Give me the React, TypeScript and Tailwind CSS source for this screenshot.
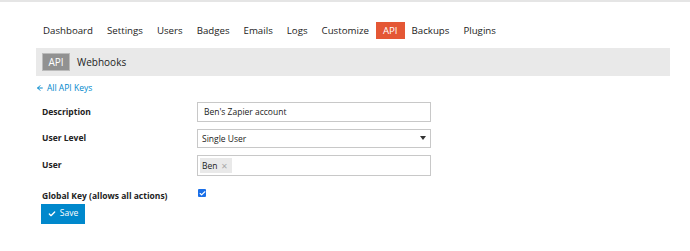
import { Check, ArrowLeft } from "lucide-react"

const NAV = ["Dashboard", "Settings", "Users", "Badges", "Emails", "Logs", "Customize", "API", "Backups", "Plugins"]

function Row({ label, children }: { label: string; children: React.ReactNode }) {
  return (
    <div className="flex items-center">
      <div className="w-[161px] pl-[6px] pt-[1px] text-[8.5px] font-bold text-[#222]">{label}</div>
      {children}
    </div>
  )
}

export default function App() {
  return (
    <div
      className="w-[690px] h-[251px] bg-white border-t-2 border-[#e5e5e5] overflow-hidden"
      style={{ fontFamily: '"Open Sans", sans-serif' }}
    >
      {/* Admin nav */}
      <div className="flex items-start pl-[36px] pt-[20px] h-[46px]">
        {NAV.map((item) => (
          <span
            key={item}
            className={
              item === "API"
                ? "px-[7px] h-[17px] leading-[17px] text-[9.7px] bg-[#e45735] text-white"
                : "px-[7px] h-[17px] leading-[17px] text-[9.7px] text-[#222]"
            }
          >
            {item}
          </span>
        ))}
      </div>

      {/* Sub header */}
      <div className="ml-[36px] w-[634px] h-[28px] bg-[#e9e9e9] flex items-center pl-[6px] gap-[7px]">
        <span className="h-[18px] w-[28px] text-center leading-[16px] text-[10px] bg-[#919191] text-white border border-[#bbb]">
          API
        </span>
        <span className="text-[10px] text-[#222]">Webhooks</span>
      </div>

      {/* Back link */}
      <div className="ml-[36px] mt-[6px] flex items-center gap-[3px] text-[8.5px] text-[#0088cc]">
        <ArrowLeft size={8} strokeWidth={3} />
        All API Keys
      </div>

      {/* Form */}
      <div className="mt-[7px] flex flex-col">
        <div className="h-[20px] mb-[7px] ml-[36px]">
          <Row label="Description">
            <div className="w-[234px] h-[20px] border border-[#c8c8c8] px-[6px] text-[8.5px] leading-[18px] text-[#222]">
              Ben's Zapier account
            </div>
          </Row>
        </div>
        <div className="h-[19px] mb-[7px] ml-[36px]">
          <Row label="User Level">
            <div className="w-[234px] h-[19px] border border-[#c8c8c8] pl-[4px] pr-[4px] text-[8.5px] leading-[17px] text-[#222] flex items-center justify-between">
              Single User
              <span className="w-0 h-0 border-l-[3px] border-r-[3px] border-t-[4px] border-l-transparent border-r-transparent border-t-[#333]" />
            </div>
          </Row>
        </div>
        <div className="h-[21px] ml-[36px]">
          <Row label="User">
            <div className="w-[234px] h-[21px] border border-[#c8c8c8] p-[2px] flex items-center">
              <span className="h-[15px] bg-[#e9e9e9] pl-[2px] pr-[4px] text-[8.5px] leading-[15px] text-[#222] flex items-center gap-[4px]">
                Ben
                <span className="text-[#aaa] text-[8px]">✕</span>
              </span>
            </div>
          </Row>
        </div>
        <div className="h-[18px] mt-[13px] ml-[36px]">
          <Row label="Global Key (allows all actions)">
            <span className="ml-[1px] -mt-[5px] w-[8px] h-[8px] rounded-[1px] bg-[#1a6fe8] flex items-center justify-center">
              <Check size={7} strokeWidth={4} className="text-white" />
            </span>
          </Row>
        </div>
        <div className="ml-[41px] -mt-[3px]">
          <button className="w-[44px] h-[20px] bg-[#0088cc] text-white text-[8.5px] flex items-center justify-center gap-[4px]">
            <Check size={8} strokeWidth={4} />
            Save
          </button>
        </div>
      </div>
    </div>
  )
}
